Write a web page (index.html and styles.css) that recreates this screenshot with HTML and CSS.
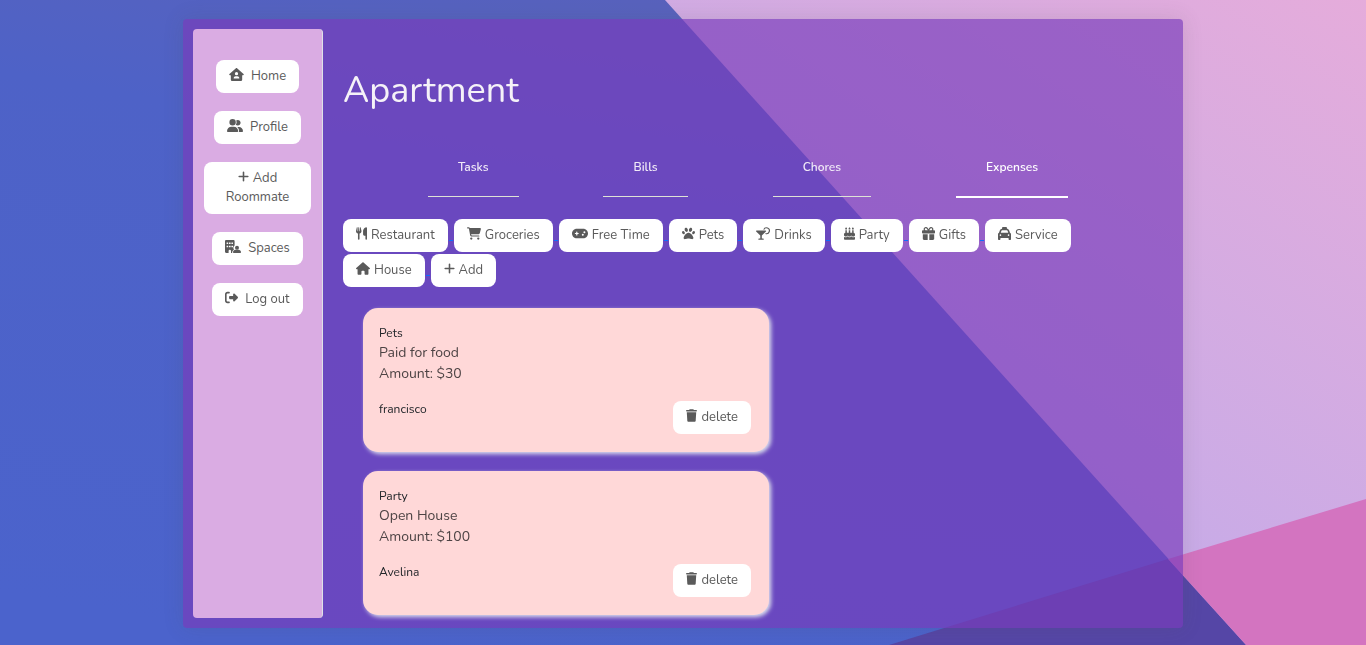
FILE: index.html
```html
<!DOCTYPE html>
<html lang="en">
<head>
<meta charset="utf-8">
<meta name="viewport" content="width=device-width, initial-scale=1">
<title>Apartment</title>
<link rel="stylesheet" href="styles.css">
</head>
<body>
<svg class="backdrop" viewBox="0 0 1366 645" preserveAspectRatio="none" aria-hidden="true">
  <defs>
    <linearGradient id="blue" x1="0.6" y1="0" x2="0.2" y2="1"><stop offset="0" stop-color="#5a62bb"/><stop offset=".3" stop-color="#4e62c7"/><stop offset="1" stop-color="#4b63cc"/></linearGradient>
    <linearGradient id="lilac" x1="1" y1="0" x2="0.5" y2="0.7"><stop offset="0" stop-color="#e5acdb"/><stop offset="1" stop-color="#c8abe7"/></linearGradient>
  </defs>
  <rect width="1366" height="645" fill="url(#blue)"/>
  <path d="M665 0H1366V645H1246Z" fill="url(#lilac)"/>
  <path d="M889 645L1168 559L1246 645Z" fill="#5546a6"/>
  <path d="M1168 559L1366 499V645H1246Z" fill="#d374c0"/>
</svg>
<svg class="sprites">
  <symbol id="house" viewBox="0 0 576 512"><path d="M575.8 255.5c0 18-15 32.1-32 32.1h-32l.7 160.2c0 2.7-.2 5.4-.5 8.1V472c0 22.1-17.9 40-40 40H392c-22.1 0-40-17.9-40-40V384c0-17.7-14.3-32-32-32H256c-17.7 0-32 14.3-32 32v88c0 22.1-17.9 40-40 40H104c-22.1 0-40-17.9-40-40V287.6H32c-18 0-32-14-32-32.1c0-9 3-17 10-24L266.4 8c7-7 15-8 22-8s15 2 21 7L564.8 231.5c8 7 12 15 11 24z"/></symbol>
  <symbol id="house-user" viewBox="0 0 576 512"><path fill-rule="evenodd" d="M575.8 255.5c0 18-15 32.1-32 32.1h-32V448c0 35-29 64-64 64H128c-35 0-64-29-64-64V287.6H32c-18 0-32-14-32-32.1c0-9 3-17 10-24L266.4 8c7-7 15-8 22-8s15 2 21 7L564.8 231.5c8 7 12 15 11 24zM288 160a64 64 0 1 0 0 128a64 64 0 1 0 0-128zM256 320c-44 0-80 36-80 80c0 9 7 16 16 16H384c9 0 16-7 16-16c0-44-36-80-80-80z"/></symbol>
  <symbol id="users" viewBox="0 0 640 512"><path d="M96 128a128 128 0 1 1 256 0A128 128 0 1 1 96 128zM0 482.3C0 383.8 79.8 304 178.3 304h91.4C368.2 304 448 383.8 448 482.3c0 16.4-13.3 29.7-29.7 29.7H29.7C13.3 512 0 498.7 0 482.3zM609.3 512H471.4c5.4-9.4 8.6-20.3 8.6-32v-8c0-60.7-27.1-115.2-69.8-151.8c2.4-.1 4.7-.2 7.1-.2h61.4C567.8 320 640 392.2 640 481.3c0 17-13.8 30.7-30.7 30.7zM432 256c-31 0-59-12.6-79.3-32.9C372.4 196.5 384 163.6 384 128c0-26.8-6.6-52.1-18.3-74.3C384.3 40.1 407.2 32 432 32c61.9 0 112 50.1 112 112s-50.1 112-112 112z"/></symbol>
  <symbol id="plus" viewBox="0 0 448 512"><path d="M256 80c0-17.7-14.3-32-32-32s-32 14.3-32 32V224H48c-17.7 0-32 14.3-32 32s14.3 32 32 32H192V432c0 17.7 14.3 32 32 32s32-14.3 32-32V288H400c17.7 0 32-14.3 32-32s-14.3-32-32-32H256V80z"/></symbol>
  <symbol id="building" viewBox="0 0 640 512"><path fill-rule="evenodd" d="M48 0H336c27 0 48 21 48 48V216c-32 22-50 55-50 90c0 30 12 55 28 73c-40 20-72 60-76 133H240V432a48 48 0 0 0-96 0v80H48c-27 0-48-21-48-48V48C0 21 21 0 48 0zM80 224c-9 0-16 7-16 16v32c0 9 7 16 16 16h32c9 0 16-7 16-16v-32c0-9-7-16-16-16zM176 224c-9 0-16 7-16 16v32c0 9 7 16 16 16h32c9 0 16-7 16-16v-32c0-9-7-16-16-16zM272 224c-9 0-16 7-16 16v32c0 9 7 16 16 16h32c9 0 16-7 16-16v-32c0-9-7-16-16-16zM80 96c-9 0-16 7-16 16v32c0 9 7 16 16 16h32c9 0 16-7 16-16v-32c0-9-7-16-16-16zM176 96c-9 0-16 7-16 16v32c0 9 7 16 16 16h32c9 0 16-7 16-16v-32c0-9-7-16-16-16zM272 96c-9 0-16 7-16 16v32c0 9 7 16 16 16h32c9 0 16-7 16-16v-32c0-9-7-16-16-16z"/><circle cx="480" cy="304" r="80"/><path d="M320 485c0-56 45-101 101-101H539c56 0 101 45 101 101c0 15-12 27-27 27H347c-15 0-27-12-27-27z"/></symbol>
  <symbol id="logout" viewBox="0 0 512 512"><path d="M377.9 105.9L500.7 228.7c7.2 7.2 11.3 17.1 11.3 27.3s-4.1 20.1-11.3 27.3L377.9 406.1c-6.4 6.4-15 9.9-24 9.9c-18.7 0-33.9-15.2-33.9-33.9V320H192c-17.7 0-32-14.3-32-32V224c0-17.7 14.3-32 32-32H320V129.9c0-18.7 15.2-33.9 33.9-33.9c9 0 17.6 3.6 24 9.9zM160 96H96c-17.7 0-32 14.3-32 32V384c0 17.7 14.3 32 32 32h64c17.7 0 32 14.3 32 32s-14.3 32-32 32H96c-53 0-96-43-96-96V128C0 75 43 32 96 32h64c17.7 0 32 14.3 32 32s-14.3 32-32 32z"/></symbol>
  <symbol id="utensils" viewBox="0 0 448 512"><path d="M416 0C400 0 288 32 288 176V288c0 35.3 28.7 64 64 64h32V480c0 17.7 14.3 32 32 32s32-14.3 32-32V32c0-17.7-14.3-32-32-32zM64 16C64 7.8 57.9 1 49.7 .1S34.2 4.6 32.4 12.5L2.1 148.8C.7 155.1 0 161.5 0 167.9c0 45.9 35.1 83.6 80 87.7V480c0 17.7 14.3 32 32 32s32-14.3 32-32V255.6c44.9-4.1 80-41.8 80-87.7c0-6.4-.7-12.8-2.1-19.1L191.6 12.5c-1.8-8-9.3-13.3-17.4-12.4S160 7.8 160 16V150.2c0 5.4-4.4 9.8-9.8 9.8c-5.1 0-9.3-3.9-9.8-9L127.9 14.6C127.2 6.3 120.3 0 112 0s-15.2 6.3-15.9 14.6L83.7 151c-.5 5.1-4.7 9-9.8 9c-5.4 0-9.8-4.4-9.8-9.8V16z"/></symbol>
  <symbol id="cart" viewBox="0 0 576 512"><path d="M0 24C0 10.7 10.7 0 24 0H69.5c22 0 41.5 12.8 50.6 32h411c26.3 0 45.5 25 38.6 50.4l-41 152.3c-8.5 31.4-37 53.3-69.5 53.3H170.7l5.4 28.5c2.2 11.3 12.1 19.5 23.6 19.5H488c13.3 0 24 10.7 24 24s-10.7 24-24 24H199.7c-34.6 0-64.3-24.6-70.7-58.5L77.4 54.5c-.7-3.8-4-6.5-7.9-6.5H24C10.7 48 0 37.3 0 24zM128 464a48 48 0 1 1 96 0 48 48 0 1 1 -96 0zm336-48a48 48 0 1 1 0 96 48 48 0 1 1 0-96z"/></symbol>
  <symbol id="gamepad" viewBox="0 0 640 512"><path d="M192 64C86 64 0 150 0 256S86 448 192 448H448c106 0 192-86 192-192s-86-192-192-192H192zM496 168a40 40 0 1 1 0 80 40 40 0 1 1 0-80zM392 304a40 40 0 1 1 80 0 40 40 0 1 1 -80 0zM168 200c0-13.3 10.7-24 24-24s24 10.7 24 24v32h32c13.3 0 24 10.7 24 24s-10.7 24-24 24H216v32c0 13.3-10.7 24-24 24s-24-10.7-24-24V280H136c-13.3 0-24-10.7-24-24s10.7-24 24-24h32V200z"/></symbol>
  <symbol id="paw" viewBox="0 0 512 512"><path d="M226.5 92.9c14.3 42.9-.3 86.2-32.6 96.8s-70.1-15.6-84.4-58.5s.3-86.2 32.6-96.8s70.1 15.6 84.4 58.5zM100.4 198.6c18.9 32.4 14.3 70.1-10.2 84.1s-59.7-.9-78.5-33.3S-2.7 179.3 21.8 165.3s59.7 .9 78.5 33.3zM69.2 401.2C121.6 259.9 214.7 224 256 224s134.4 35.9 186.8 177.2c3.6 9.7 5.2 20.1 5.2 30.5v1.6c0 25.8-20.9 46.7-46.7 46.7c-11.5 0-22.9-1.4-34-4.2l-88-22c-15.3-3.8-31.3-3.8-46.6 0l-88 22c-11.1 2.8-22.5 4.2-34 4.2C84.9 480 64 459.1 64 433.3v-1.6c0-10.4 1.6-20.8 5.2-30.5zM421.8 282.7c-24.5-14-29.1-51.7-10.2-84.1s54-47.3 78.5-33.3s29.1 51.7 10.2 84.1s-54 47.3-78.5 33.3zM310.1 189.7c-32.3-10.6-46.9-53.9-32.6-96.8s52.1-69.1 84.4-58.5s46.9 53.9 32.6 96.8s-52.1 69.1-84.4 58.5z"/></symbol>
  <symbol id="drink" viewBox="0 0 576 512"><path d="M24 128h368c21 0 32 26 17 41L240 338v126h56a24 24 0 0 1 0 48H120a24 24 0 0 1 0-48h56V338L7 169c-15-15-4-41 17-41z"/><path d="M320 96A120 120 0 1 1 392 257" fill="none" stroke="currentColor" stroke-width="48"/></symbol>
  <symbol id="cake" viewBox="0 0 448 512"><path d="M86 0c12 16 38 42 38 60a38 36 0 0 1-76 0c0-18 26-44 38-60zM224 0c12 16 38 42 38 60a38 36 0 0 1-76 0c0-18 26-44 38-60zM362 0c12 16 38 42 38 60a38 36 0 0 1-76 0c0-18 26-44 38-60zM56 120h60v104h78V120h60v104h78V120h60v104c32 0 56 29 56 64v56c-24 0-30 32-74 32s-44-32-75-32s-31 32-75 32s-44-32-75-32s-31 32-75 32s-50-32-74-32v-56c0-35 24-64 56-64zM0 386c14 10 30 26 74 26s52-32 75-32s31 32 75 32s52-32 75-32s31 32 75 32s60-16 74-26v94c0 18-14 32-32 32H32c-18 0-32-14-32-32z"/></symbol>
  <symbol id="gift" viewBox="0 0 512 512"><path d="M190.5 68.8L225.3 128H152c-22.1 0-40-17.9-40-40s17.9-40 40-40h2.2c14.9 0 28.8 7.9 36.3 20.8zM64 88c0 14.4 3.5 28 9.6 40H32c-17.7 0-32 14.3-32 32v64c0 17.7 14.3 32 32 32H480c17.7 0 32-14.3 32-32V160c0-17.7-14.3-32-32-32H438.4c6.1-12 9.6-25.6 9.6-40c0-48.6-39.4-88-88-88h-2.2c-31.9 0-61.5 16.9-77.7 44.4L256 85.5l-24.1-41C215.7 16.9 186.1 0 154.2 0H152C103.4 0 64 39.4 64 88zm336 0c0 22.1-17.9 40-40 40H286.7l34.8-59.2C329.1 55.9 342.9 48 357.8 48H360c22.1 0 40 17.9 40 40zM32 288V464c0 26.5 21.5 48 48 48H224V288H32zM288 512H432c26.5 0 48-21.5 48-48V288H288V512z"/></symbol>
  <symbol id="taxi" viewBox="0 0 512 512"><path d="M192 0c-17.7 0-32 14.3-32 32V64.2c-38.6 2.2-72.3 27.3-85.2 64.1L39.6 228.8C16.4 238.4 0 261.3 0 288V480c0 17.7 14.3 32 32 32H64c17.7 0 32-14.3 32-32V432H416v48c0 17.7 14.3 32 32 32h32c17.7 0 32-14.3 32-32V288c0-26.7-16.4-49.6-39.6-59.2L437.2 128.3c-12.9-36.8-46.6-62-85.2-64.1V32c0-17.7-14.3-32-32-32H192zM165.4 128H346.6c13.6 0 25.7 8.6 30.2 21.4L402.9 224H109.1l26.1-74.6c4.5-12.8 16.6-21.4 30.2-21.4zM96 288a32 32 0 1 1 0 64 32 32 0 1 1 0-64zm288 32a32 32 0 1 1 64 0 32 32 0 1 1 -64 0z"/></symbol>
  <symbol id="trash" viewBox="0 0 448 512"><path d="M135.2 17.7L128 32H32C14.3 32 0 46.3 0 64S14.3 96 32 96H416c17.7 0 32-14.3 32-32s-14.3-32-32-32H320l-7.2-14.3C307.4 6.8 296.3 0 284.2 0H163.8c-12.1 0-23.2 6.8-28.6 17.7zM416 128H32L53.2 467c1.6 25.3 22.6 45 47.9 45H346.9c25.3 0 46.3-19.7 47.9-45L416 128z"/></symbol>
</svg>
<div class="panel">
  <nav class="sidebar" aria-label="Main">
    <a class="btn" href="#home"><svg class="icon w15"><use href="#house-user"/></svg>Home</a>
    <a class="btn" href="#profile"><svg class="icon w16"><use href="#users"/></svg>Profile</a>
    <a class="btn" href="#roommate"><svg class="icon w11 tight"><use href="#plus"/></svg>Add Roommate</a>
    <a class="btn" href="#spaces"><svg class="icon w16"><use href="#building"/></svg>Spaces</a>
    <a class="btn" href="#logout"><svg class="icon w13"><use href="#logout"/></svg>Log out</a>
  </nav>
  <main class="content">
    <h1>Apartment</h1>
    <nav class="tabs" aria-label="Sections">
      <a href="#tasks">Tasks</a>
      <a href="#bills">Bills</a>
      <a href="#chores">Chores</a>
      <a href="#expenses" class="active" aria-current="page">Expenses</a>
    </nav>
    <div class="chips">
      <a class="btn" href="#restaurant"><svg class="icon w11"><use href="#utensils"/></svg>Restaurant</a>
      <a class="btn" href="#groceries"><svg class="icon w14"><use href="#cart"/></svg>Groceries</a>
      <a class="btn" href="#freetime"><svg class="icon w16"><use href="#gamepad"/></svg>Free Time</a>
      <a class="btn" href="#pets"><svg class="icon w13"><use href="#paw"/></svg>Pets</a>
      <a class="btn" href="#drinks"><svg class="icon w14"><use href="#drink"/></svg>Drinks</a>
      <a class="btn" href="#party"><svg class="icon w11"><use href="#cake"/></svg>Party</a>
      <a class="btn" href="#gifts"><svg class="icon w13"><use href="#gift"/></svg>Gifts</a>
      <a class="btn last" href="#service"><svg class="icon w13"><use href="#taxi"/></svg>Service</a>
      <a class="btn" href="#house-costs"><svg class="icon w14"><use href="#house"/></svg>House</a>
      <a class="btn last" href="#add"><svg class="icon w11"><use href="#plus"/></svg>Add</a>
    </div>
    <section class="cards">
      <article class="card">
        <h2>Pets</h2>
        <p>Paid for food</p>
        <p>Amount: $30</p>
        <footer><span>francisco</span><button class="btn" type="button"><svg class="icon w11 tight"><use href="#trash"/></svg>delete</button></footer>
      </article>
      <article class="card">
        <h2>Party</h2>
        <p>Open House</p>
        <p>Amount: $100</p>
        <footer><span>Avelina</span><button class="btn" type="button"><svg class="icon w11 tight"><use href="#trash"/></svg>delete</button></footer>
      </article>
    </section>
  </main>
</div>
</body>
</html>
```

FILE: styles.css
```css
* { box-sizing: border-box; }

body {
  margin: 0;
  min-height: 100vh;
  padding: 19px 16px 17px;
  display: flex;
  justify-content: center;
  background: #4b63cc;
  font-family: Nunito, Lato, sans-serif;
  font-weight: 400;
  color: #212529;
}

.backdrop {
  position: fixed;
  inset: 0;
  z-index: -1;
  width: 100%;
  height: 100%;
}

.sprites { display: none; }

.panel {
  flex: 1;
  max-width: 1000px;
  display: flex;
  padding: 10px;
  border-radius: 4px;
  background: rgba(121, 59, 186, .67);
  box-shadow: 0 0 20px rgba(80, 80, 80, .15);
}

.sidebar {
  flex: 0 0 130px;
  display: flex;
  flex-direction: column;
  align-items: center;
  gap: 18px;
  padding: 31px 11px;
  border-right: 1px solid #dee2e6;
  border-radius: 4px;
  background: #daace3;
}

.btn {
  display: inline-block;
  padding: 7px 13px;
  border: 0;
  border-radius: 8px;
  background: #fff;
  color: #5a5a5a;
  font-family: inherit;
  font-size: 13px;
  font-weight: 400;
  line-height: 19px;
  text-align: center;
  text-decoration: none;
}

.icon {
  height: 13px;
  margin-right: 4px;
  fill: currentColor;
  vertical-align: -1px;
}

.sidebar .icon { margin-right: 7px; }
.sidebar .tight { margin-right: 4px; }

.w11 { width: 11px; }
.w13 { width: 13px; }
.w14 { width: 14px; }
.w15 { width: 15px; }
.w16 { width: 16px; }

.content {
  flex: 1;
  min-width: 0;
  padding: 39px 20px 0 20px;
}

h1 {
  margin: 0 0 42px;
  color: #f5f2f8;
  font-size: 36px;
  font-weight: 400;
  line-height: 46px;
}

.tabs {
  display: flex;
  justify-content: space-evenly;
  align-items: flex-start;
  margin-bottom: 21px;
}

.tabs a {
  padding: 1px 30px 18px;
  border-bottom: 1px solid #dee2d6;
  color: #f1eaf7;
  font-size: 12px;
  font-weight: 600;
  line-height: 21px;
  text-decoration: none;
}

.tabs .active {
  border-bottom: 2px solid #fff;
  color: #fff;
}

.chips {
  display: flex;
  flex-wrap: wrap;
  gap: 2px 6px;
  margin-bottom: 21px;
  padding-right: 60px;
}

.chips .btn { position: relative; }

.chips .btn:not(.last)::after {
  content: "";
  position: absolute;
  left: 100%;
  top: 21px;
  width: 4px;
  height: 1px;
  margin-left: 1px;
  background: #0d6efd;
}

.cards {
  display: grid;
  grid-template-columns: minmax(0, 406px);
  gap: 19px;
  padding-left: 20px;
}

.card {
  padding: 16px 18px 18px 16px;
  border-radius: 15px;
  background: #ffd8d8;
  box-shadow: 2px 2px 4px #dfe3ee;
}

.card h2 {
  margin: 0;
  font-size: 12px;
  font-weight: 400;
  line-height: 18px;
}

.card p {
  margin: 0;
  color: #4d4344;
  font-size: 14px;
  line-height: 21px;
}

.card footer {
  display: flex;
  justify-content: space-between;
  align-items: flex-start;
  margin-top: 17px;
  font-size: 12px;
  line-height: 16px;
}
```
